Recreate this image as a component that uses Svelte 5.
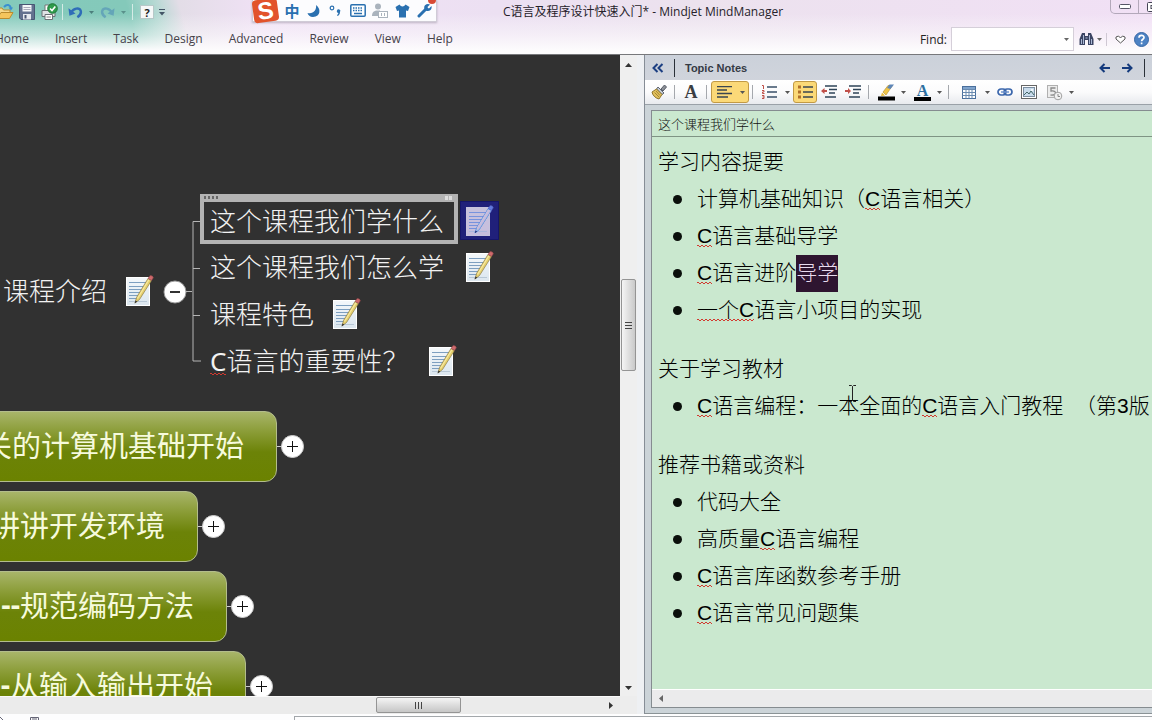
<script>
  const menus = ['Home', 'Insert', 'Task', 'Design', 'Advanced', 'Review', 'View', 'Help'];

  const subtopics = [
    { text: '这个课程我们学什么', x: 210, y: 222, iconX: 466, selected: true },
    { text: '这个课程我们怎么学', x: 210, y: 268, iconX: 466 },
    { text: '课程特色', x: 210, y: 315, iconX: 333 },
    { misspelt: 'C', text: '语言的重要性？', x: 210, y: 362, iconX: 429 }
  ];

  const mainTopics = [
    { text: '关的计算机基础开始', right: 277, top: 411 },
    { text: '讲讲开发环境', right: 198, top: 491 },
    { dash: '--', text: '规范编码方法', right: 227, top: 571 },
    { dash: '--', text: '从输入输出开始', right: 246, top: 651 }
  ];

  // Each item is a list of runs: s = spelling mark, m = selected text
  const notes = [
    {
      title: '学习内容提要',
      items: [
        [{ t: '计算机基础知识（' }, { t: 'C', s: true }, { t: '语言相关）' }],
        [{ t: 'C', s: true }, { t: '语言基础导学' }],
        [{ t: 'C', s: true }, { t: '语言进阶' }, { t: '导学', m: true }],
        [{ t: '一个C', s: true }, { t: '语言小项目的实现' }]
      ]
    },
    {
      title: '关于学习教材',
      items: [
        [
          { t: 'C', s: true },
          { t: '语言编程：一本全面的' },
          { t: 'C', s: true },
          { t: '语言入门教程\u00a0 （第3版' }
        ]
      ]
    },
    {
      title: '推荐书籍或资料',
      items: [
        [{ t: '代码大全' }],
        [{ t: '高质量' }, { t: 'C', s: true }, { t: '语言编程' }],
        [{ t: 'C', s: true }, { t: '语言库函数参考手册' }],
        [{ t: 'C', s: true }, { t: '语言常见问题集' }]
      ]
    }
  ];
</script>

{#snippet caret()}
  <svg class="caret" width="5" height="3" viewBox="0 0 5 3"><path d="M0 0h5L2.5 3z" fill="currentColor" /></svg>
{/snippet}

{#snippet noteIcon()}
  <svg width="28" height="31" viewBox="0 0 28 31">
    <defs>
      <linearGradient id="paper" x1="0" y1="0" x2="0" y2="1">
        <stop offset="0" stop-color="#f4f8fb" /><stop offset="1" stop-color="#dbe6ee" />
      </linearGradient>
    </defs>
    <rect x="0.5" y="2.5" width="23" height="28" fill="url(#paper)" stroke="#fff" />
    <path d="M3 7.5h18M3 11.5h16M3 14.5h15M3 17.5h13M3 20.5h12M3 23.5h8" stroke="#7d9fc0" />
    <path d="M3 26.5h18" stroke="#b8c8d6" />
    <path d="M9 28L10.500 22.500 22 3.500l3.500 2L13.500 24.500z" fill="#e6d06c" stroke="#8a7a48" stroke-width=".7" />
    <path d="M11.500 23.500L23 4.500" stroke="#f6e9a4" stroke-width="1.200" />
    <path d="M8.500 28.500l1-3 1.800 1.100z" fill="#333" />
    <path d="M22 3.500l1.700-2.500c1-1.200 4.200.5 3.500 2l-1.700 2.500z" fill="#cf6a6c" stroke="#8b4448" stroke-width=".6" />
  </svg>
{/snippet}

<div class="app">
  <header>
    <div class="title-row">
      <div class="quick">
        <button class="q" aria-label="Open">
          <svg width="18" height="18" viewBox="0 0 18 18"><path d="M1 15V5h5l1.500 2H14v3" fill="#f7d88a" stroke="#b98b2e" /><path d="M1 15.500l4-6h12l-3.500 6z" fill="#f5c55c" stroke="#b98b2e" /><path d="M8 4c3-3.500 6-2 7 1" fill="none" stroke="#3a8fd0" stroke-width="2" /><path d="M12.500 4.500h4.500l-2 3z" fill="#3a8fd0" /></svg>
        </button>
        <button class="q" aria-label="Save">
          <svg width="16" height="16" viewBox="0 0 16 16"><path d="M.5.5h15v15H2l-1.500-1.500z" fill="#63718f" stroke="#485573" /><path d="M3.500 1h9v6.500h-9z" fill="#f4f6f8" /><path d="M4.500 3.500h7M4.500 5.500h7" stroke="#aab" /><path d="M4 10h8v5.500H4z" fill="#e4e8ee" /><path d="M5.500 11h2v3.500h-2z" fill="#485573" /></svg>
        </button>
        <button class="q" aria-label="Quick print">
          <svg width="17" height="18" viewBox="0 0 17 18"><path d="M4 8V2h7v6" fill="#fff" stroke="#777" /><path d="M1 7.500h13v6H1z" fill="#dfe3e5" stroke="#6a7074" /><path d="M4 11.500h7.500v5H4z" fill="#fff" stroke="#6a7074" /><path d="M5.500 14h4.500" stroke="#888" /><circle cx="11.500" cy="5.500" r="4.800" fill="#2f9c4c" stroke="#1f7838" /><path d="M9 5.500l2 2 3.300-4" fill="none" stroke="#fff" stroke-width="1.600" /></svg>
        </button>
        <span class="q-sep"></span>
        <button class="q-split" aria-label="Undo">
          <svg width="15" height="13" viewBox="0 0 16 13"><path d="M3 7C6 1.500 12 1 13.500 4.500 14.500 7.500 13 9.500 10 11.500" fill="none" stroke="#2f6db8" stroke-width="2.600" /><path d="M.5 2l1 8 6.500-2.500z" fill="#2f6db8" /></svg>
          {@render caret()}
        </button>
        <button class="q-split faded" aria-label="Redo">
          <svg width="15" height="13" viewBox="0 0 16 13"><path d="M13 7C10 1.500 4 1 2.500 4.500 1.500 7.500 3 9.500 6 11.500" fill="none" stroke="#5a9ab8" stroke-width="2.600" /><path d="M15.500 2l-1 8L8 7.500z" fill="#5a9ab8" /></svg>
          {@render caret()}
        </button>
        <span class="q-sep"></span>
        <button class="q help-key" aria-label="Help"><b>?</b></button>
        <button class="q-more" aria-label="Customize toolbar">
          <svg width="6" height="7" viewBox="0 0 6 7"><path d="M0 .5h6" stroke="#456" /><path d="M0 3h6L3 6.500z" fill="#456" /></svg>
        </button>
      </div>
      <h1>C语言及程序设计快速入门* - Mindjet MindManager</h1>
      <div class="window-buttons">
        <button aria-label="Minimize"><svg width="12" height="5" viewBox="0 0 12 5"><rect x=".5" y=".5" width="11" height="4" rx="1" fill="#fff" stroke="#556" /></svg></button>
        <button aria-label="Restore"><svg width="12" height="10" viewBox="0 0 12 10"><rect x=".5" y=".5" width="11" height="9" rx="1" fill="#fff" stroke="#445" /><rect x="4" y="3.500" width="4" height="3" fill="#fff" stroke="#445" /></svg></button>
      </div>
    </div>

    <div class="menu-row">
      <nav>
        {#each menus as m}<a href="#{m.toLowerCase()}">{m}</a>{/each}
      </nav>
      <div class="find">
        <label for="find">Find:</label>
        <div class="combo">
          <input id="find" type="text" />
          <button aria-label="Recent searches">{@render caret()}</button>
        </div>
        <button class="binoculars" aria-label="Search">
          <svg width="15" height="14" viewBox="0 0 15 14"><path d="M3 1h3v3h3V1h3l2.500 6v6H9V8H6v5H.5V7z" fill="#3b4463" /><path d="M2.500 7v5M4.500 3v9M10.500 3v9M12.500 7v5M6.500 6h2" stroke="#a9b7d4" /></svg>
          {@render caret()}
        </button>
        <span class="find-sep"></span>
        <button class="heart" aria-label="Favourites">
          <svg width="11" height="9" viewBox="0 0 11 9"><path d="M5.500 3L3.500 1 1 2v2l4.500 4L10 4V2L7.500 1z" fill="#fff" stroke="#555" /></svg>
        </button>
        <button class="round-help" aria-label="Help">
          <svg width="15" height="15" viewBox="0 0 15 15"><circle cx="7.500" cy="7.500" r="7" fill="#4d82c4" stroke="#3767a5" /><path d="M5 5.800C5 2.500 10 2.700 10 5.500c0 1.800-2.400 1.700-2.400 3.700M7.600 10.500v1.800" fill="none" stroke="#fff" stroke-width="1.700" /></svg>
        </button>
      </div>
    </div>

    <div class="ime">
      <span class="ime-logo"><b>S</b></span>
      <button class="zh">中</button>
      <button aria-label="Half width"><svg width="14" height="14" viewBox="0 0 14 14"><path d="M9 1c5 3 5 12-3 12-3 0-5-2-5.500-4C6 10.500 10 6 9 1z" fill="#2a70b0" /></svg></button>
      <button aria-label="Punctuation"><svg width="14" height="12" viewBox="0 0 14 12"><circle cx="3" cy="3" r="1.800" fill="none" stroke="#2a70b0" stroke-width="1.200" /><path d="M8 5.500a1.700 1.700 0 1 1 3 1.500c0 2-1 3.500-2.500 4L8 10c1-.5 1.300-1.200 1.300-2A1.700 1.700 0 0 1 8 5.500z" fill="#2a70b0" /></svg></button>
      <button aria-label="Soft keyboard"><svg width="16" height="13" viewBox="0 0 16 13"><rect x=".8" y=".8" width="14.400" height="11.400" rx="1" fill="#fff" stroke="#2a70b0" stroke-width="1.500" /><path d="M3 4h10M3 6.500h10" stroke="#2a70b0" stroke-width="1.500" stroke-dasharray="1.500 1" /><path d="M4 9.500h8" stroke="#2a70b0" stroke-width="1.500" /></svg></button>
      <button aria-label="Account"><svg width="16" height="15" viewBox="0 0 16 15"><circle cx="6" cy="3.500" r="3" fill="#aab3bd" /><path d="M0 13c0-4 2-5.500 6-5.500h2V13z" fill="#aab3bd" /><rect x="6.500" y="8.500" width="9" height="6" fill="#fff" stroke="#aab3bd" /><path d="M9.500 10v3M12.500 10v3" stroke="#aab3bd" /></svg></button>
      <button aria-label="Skin"><svg width="15" height="14" viewBox="0 0 15 14"><path d="M4.500.5C6 3 9 3 10.500.5L14.500 3 13 7l-2-.5V13.500H4V6.500L2 7 .5 3z" fill="#2a70b0" /></svg></button>
      <button aria-label="Settings"><svg width="15" height="15" viewBox="0 0 15 15"><path d="M2 13L9 6" stroke="#2a70b0" stroke-width="3" stroke-linecap="round" /><path d="M13 1.500L10.500 4l.5 1 1 .5L14.500 3c.8 3-1.500 5.500-4.500 5C7 7.500 6.500 4 8 2.200 9.500.8 11.500.7 13 1.500z" fill="#2a70b0" /></svg></button>
      <i class="badge"></i>
    </div>
  </header>

  <main>
    <section class="map">
      <div class="canvas">
        <div class="parent-topic">课程介绍</div>
        <div class="parent-note">{@render noteIcon()}</div>
        <button class="knob minus" aria-label="Collapse">
          <svg width="24" height="24" viewBox="0 0 24 24"><circle cx="12" cy="12" r="11" fill="#fff" stroke="#999" /><path d="M7 12h10" stroke="#333" stroke-width="2" /></svg>
        </button>
        <svg class="branches" width="16" height="144" viewBox="0 0 16 144"><path d="M0 71.500h6M14 1.500H7v139.500h8M7 48.500h7M7 95.500h7" fill="none" stroke="#b5b5b5" stroke-width="1" /></svg>

        {#each subtopics as s}
          {#if s.selected}
            <div class="frame"></div>
            <div class="icon-highlight"></div>
          {/if}
          <div class="subtopic" style="left:{s.x}px;top:{s.y - 22}px">
            {#if s.misspelt}<span class="latin spell">{s.misspelt}</span>{/if}{s.text}
          </div>
          <div class="note" class:dimmed={s.selected} style="left:{s.iconX}px;top:{s.y - 17}px">{@render noteIcon()}</div>
        {/each}

        {#each mainTopics as t}
          <div class="topic" style="width:{t.right + 30}px;top:{t.top}px">
            {#if t.dash}<b>{t.dash}</b>{/if}<span>{t.text}</span>
          </div>
          <button class="knob" aria-label="Expand" style="left:{t.right}px;top:{t.top + 23}px">
            <svg width="27" height="24" viewBox="0 0 27 24"><path d="M0 12.500h5" stroke="#ccc" /><circle cx="15.500" cy="12.500" r="11" fill="#fff" stroke="#ccc" /><path d="M10 12.500h11M15.500 7v11" stroke="#111" /></svg>
          </button>
        {/each}
      </div>
      <div class="v-scroll">
        <svg width="7" height="4" viewBox="0 0 7 4"><path d="M0 4h7L3.500 0z" fill="#333" /></svg>
        <div class="v-track"><div class="v-thumb"><i></i><i></i><i></i></div></div>
        <svg width="7" height="4" viewBox="0 0 7 4"><path d="M0 0h7L3.500 4z" fill="#333" /></svg>
      </div>
      <div class="h-scroll">
        <div class="h-track"><div class="h-thumb"><i></i><i></i><i></i></div></div>
        <svg width="4" height="7" viewBox="0 0 4 7"><path d="M0 0v7l4-3.500z" fill="#333" /></svg>
      </div>
      <div class="corner"></div>
    </section>

    <aside>
      <div class="panel-head">
        <button aria-label="Collapse panel"><svg width="12" height="10" viewBox="0 0 12 10"><path d="M5.500 1L1.500 5l4 4M10.500 1l-4 4 4 4" fill="none" stroke="#1c3f82" stroke-width="2" /></svg></button>
        <span class="bar"></span>
        <h2>Topic Notes</h2>
        <button class="arrow" aria-label="Previous"><svg width="11" height="10" viewBox="0 0 11 10"><path d="M11 5H2M5.500 1l-4 4 4 4" fill="none" stroke="#143a7c" stroke-width="2" /></svg></button>
        <button class="arrow" aria-label="Next"><svg width="11" height="10" viewBox="0 0 11 10"><path d="M0 5h9M5.500 1l4 4-4 4" fill="none" stroke="#143a7c" stroke-width="2" /></svg></button>
        <span class="bar last"></span>
      </div>

      <div class="tools">
        <button aria-label="Format painter"><svg width="16" height="16" viewBox="0 0 16 16"><path d="M10 5l3.500-4L15.500 3 12 7z" fill="#8b8f96" stroke="#555b66" /><path d="M7 3l6 6-2 1.500L5.500 5z" fill="#c6ccd4" stroke="#5b6270" /><path d="M5.500 5L11 10.500 8 15C4 14 1.500 11 1 8z" fill="#e3c15c" stroke="#8e742c" /><path d="M3.500 8.500L8 13M5 7l4 4.500" stroke="#a58632" /></svg></button>
        <span class="sep"></span>
        <button class="serif-a" aria-label="Font">A</button>
        <span class="sep"></span>
        <button class="split active wide" aria-label="Align left"><svg width="15" height="12" viewBox="0 0 15 12"><path d="M0 .5h15M0 4h10M0 7.500h15M0 11h11" stroke="#3a4650" stroke-width="1.500" /></svg>{@render caret()}</button>
        <span class="sep"></span>
        <button class="split" aria-label="Numbered list"><svg width="15" height="14" viewBox="0 0 15 14"><path d="M5 2h10M5 7h10M5 12h10" stroke="#3a5068" stroke-width="1.500" /><path d="M0 .5h1.500V4M0 5.500h2v1.500H.5V8.500H2.500M0 10.500h2v3H0M.5 12h1.500" fill="none" stroke="#c05048" /></svg>{@render caret()}</button>
        <button class="active" aria-label="Bulleted list"><svg width="15" height="14" viewBox="0 0 15 14"><path d="M5 2h10M5 7h10M5 12h10" stroke="#3a4650" stroke-width="1.500" /><path d="M0 .5h3v3H0zM0 5.500h3v3H0zM0 10.500h3v3H0z" fill="#b0702a" /></svg></button>
        <button aria-label="Decrease indent"><svg width="16" height="14" viewBox="0 0 16 14"><path d="M4 1h12M8 4.500h8M8 8h6M4 12h11" stroke="#2f4458" stroke-width="1.500" /><path d="M0 6l3.500-3v2H6v2H3.500v2z" fill="#c0504a" /></svg></button>
        <button aria-label="Increase indent"><svg width="16" height="14" viewBox="0 0 16 14"><path d="M4 1h12M8 4.500h8M8 8h6M4 12h11" stroke="#2f4458" stroke-width="1.500" /><path d="M6 6L3 3v2H0v2h3v2z" fill="#c0504a" /></svg></button>
        <span class="sep"></span>
        <button class="split" aria-label="Highlight colour"><svg width="17" height="17" viewBox="0 0 17 17"><path d="M0 12.500h17V16.500H0z" fill="#000" /><path d="M4 8.500L7 11.500 3 12z" fill="#e8b830" /><path d="M5 8l5-6.500h4.500L8 11z" fill="#f0c548" stroke="#b08a2c" stroke-width=".6" /><path d="M9 4l2.500-3.500H16L12.500 5z" fill="#5e86b8" /></svg>{@render caret()}</button>
        <button class="split" aria-label="Font colour"><span class="ink">A</span>{@render caret()}</button>
        <span class="sep gap"></span>
        <button class="split" aria-label="Insert table"><svg width="14" height="13" viewBox="0 0 14 13"><rect x=".5" y=".5" width="13" height="12" fill="#fff" stroke="#4a6f9c" /><path d="M1 1h12v2H1z" fill="#7fa3cc" /><path d="M.5 3.500h13M.5 6.500h13M.5 9.500h13M4 3v9.500M7 3v9.500M10 3v9.500" stroke="#6a8bb0" /></svg>{@render caret()}</button>
        <button aria-label="Insert link"><svg width="16" height="8" viewBox="0 0 16 8"><rect x="1" y="1" width="8" height="6" rx="3" fill="none" stroke="#3a66ac" stroke-width="1.700" /><rect x="7" y="1" width="8" height="6" rx="3" fill="none" stroke="#3a66ac" stroke-width="1.700" /><path d="M4 4h8" stroke="#6f93cc" stroke-width="1.500" /></svg></button>
        <button aria-label="Insert picture"><svg width="16" height="14" viewBox="0 0 16 14"><rect x=".5" y=".5" width="15" height="13" fill="#fff" stroke="#666" /><rect x="2.500" y="2.500" width="11" height="9" fill="#c9dcec" stroke="#7c8fa2" /><path d="M3 10l3-3 2 2 2-3 3 4" fill="none" stroke="#466" /><circle cx="11" cy="5" r="1" fill="#fff" /></svg></button>
        <button class="split" aria-label="Insert date"><svg width="17" height="17" viewBox="0 0 17 17"><rect x="1.500" y="1.500" width="10" height="12" fill="#ececec" stroke="#b0b0b0" /><path d="M9.500 4H5v3c4-.5 4.500 1 4.500 2S8 11.500 4.500 11" fill="none" stroke="#8a8a8a" stroke-width="1.300" /><circle cx="12" cy="12" r="3.800" fill="#f2f2f2" stroke="#a0a0a0" /><path d="M12 10v2.500h2" fill="none" stroke="#888" /></svg>{@render caret()}</button>
      </div>

      <div class="note-area">
        <div class="note-frame">
          <div class="note-title">这个课程我们学什么</div>
          <article>
            {#each notes as n}
              <section>
                <h3>{n.title}</h3>
                <ul>
                  {#each n.items as item}
                    <li>{#each item as r}{#if r.m}<mark>{r.t}</mark>{:else}<span class:spell={r.s}>{r.t}</span>{/if}{/each}</li>
                  {/each}
                </ul>
              </section>
            {/each}
            <svg class="ibeam" width="7" height="17" viewBox="0 0 7 17"><path d="M0 .5h2.500l1 1 1-1H7M3.500 1.500v14M0 16.500h2.500l1-1 1 1H7" fill="none" stroke="#222" /></svg>
          </article>
          <div class="note-scroll"><svg width="4" height="7" viewBox="0 0 4 7"><path d="M4 0v7L0 3.500z" fill="#666" /></svg></div>
        </div>
      </div>
    </aside>
  </main>

  <footer>
    <div class="marks">
      <svg width="42" height="4" viewBox="0 0 42 4"><path d="M0 1l3 3M30.500 4V1.500h8V4M32 3h5" fill="none" stroke="#667" /></svg>
    </div>
    <div class="tabs"></div>
  </footer>
</div>

<style>
  :global(body) { margin: 0; }
  .app, .app * { box-sizing: border-box; }
  .app {
    height: 100vh;
    display: flex;
    flex-direction: column;
    overflow: hidden;
    background: #fdfdfd;
    font-family: "Open Sans", "Noto Sans CJK SC", sans-serif;
    font-size: 12px;
    color: #333;
  }
  button {
    border: 0;
    padding: 0;
    margin: 0;
    background: none;
    color: inherit;
    font: inherit;
    display: flex;
    align-items: center;
    justify-content: center;
    flex: none;
  }
  h1, h2, h3, ul { margin: 0; padding: 0; }
  h1 { font-weight: 400; }
  svg { display: block; flex: none; }

  header {
    position: relative;
    flex: none;
    height: 55px;
    overflow: hidden;
    border-bottom: 1px solid #77787b;
    background:
      linear-gradient(to bottom, rgba(255, 255, 255, 0) 25%, rgba(253, 252, 253, .5) 65%, #fdfcfd 94%),
      linear-gradient(75deg, #84cabb 0, #84c9ba 135px, #b4d8d2 162px, rgba(230, 222, 234, 0) 186px),
      linear-gradient(to right, #e3dde7 180px, #f0e1f5 260px, #ece0f2 500px, #ece2ee 700px, #f1e0f5 100%);
  }
  .title-row { display: flex; height: 24px; align-items: center; }
  .quick { display: flex; align-items: center; margin-left: -6px; flex: none; }
  .q { width: 22px; height: 22px; }
  .q-sep { width: 6px; height: 16px; border-left: 1px solid #d5ebe6; margin-left: 2px; margin-right: -2px; }
  .q-split { width: 32px; height: 22px; gap: 6px; color: #4c7f7c; padding-right: 2px; }
  .faded { opacity: .75; }
  .help-key b {
    width: 14px; height: 14px; line-height: 13px; text-align: center;
    background: #f6f8f8; border: 1px solid #b7c8c8; color: #222; font-size: 11px;
  }
  .q-more { width: 8px; height: 22px; }
  h1 { flex: 1; margin-left: 10px; text-align: center; font-size: 12px; line-height: 24px; color: #26222a; white-space: nowrap; }
  .window-buttons { display: flex; align-self: flex-start; height: 14px; margin-right: -16px; border: 1px solid #b3a8ba; border-top: 0; border-radius: 0 0 0 5px; }
  .window-buttons button { width: 28px; border-right: 1px solid #b3a8ba; }

  .menu-row { display: flex; height: 30px; align-items: center; justify-content: space-between; }
  nav { display: flex; gap: 26px; margin-left: -5px; }
  nav a { color: #45424a; text-decoration: none; line-height: 18px; }
  .find { display: flex; align-items: center; margin-right: 2px; color: #222; }
  .find label { margin-right: 4px; }
  .combo { display: flex; width: 123px; height: 24px; border: 1px solid #d5cfd9; background: #fff; }
  .combo input { flex: 1; min-width: 0; border: 0; background: none; outline: 0; font: inherit; }
  .combo button { width: 14px; color: #666; }
  .binoculars { gap: 3px; width: 32px; height: 22px; color: #666; }
  .find-sep { width: 1px; height: 13px; background: #cfc8d3; }
  .heart { width: 26px; height: 22px; }
  .round-help { width: 17px; height: 22px; }

  .ime {
    position: absolute; left: 252px; top: 0; width: 185px; height: 22px;
    display: flex; align-items: center; background: #fcfcfe;
    border: 1px solid #d0cbd6; border-top: 0; box-shadow: 0 1px 2px rgba(70, 60, 80, .3);
  }
  .ime-logo {
    flex: none; width: 25px; height: 23px; margin-right: 3px; background: #e2532b; border-radius: 4px;
    rotate: -8deg; color: #fff; font: 24px/24px "Liberation Sans", sans-serif; text-align: center;
  }
  .ime button { width: 22px; height: 22px; }
  .ime .zh { color: #2a70b0; font-size: 15px; font-weight: 700; }
  .badge { position: absolute; right: 0; top: -4px; width: 8px; height: 8px; border-radius: 50%; background: #d84a35; }

  main { flex: 1; min-height: 0; display: grid; grid-template-columns: 637fr 508fr; column-gap: 7px; background: #eef0f3; }

  .map { display: grid; grid-template-columns: minmax(0, 1fr) 17px; grid-template-rows: minmax(0, 1fr) 18px; min-width: 0; min-height: 0; }
  .canvas { position: relative; overflow: hidden; background: #313131; }
  .parent-topic, .subtopic { position: absolute; white-space: nowrap; color: #f2f2f2; font: 300 26px/40px "Noto Sans CJK SC", sans-serif; }
  .parent-topic { left: 3px; top: 215px; }
  .parent-note { position: absolute; left: 126px; top: 220px; }
  .subtopic, .note, .knob { margin-top: -55px; }
  .knob { position: absolute; }
  .minus { left: 163px; top: 280px; }
  .branches { position: absolute; left: 186px; top: 165px; }
  .frame {
    position: absolute; left: 200px; top: 139px; width: 258px; height: 50px;
    border: 4px solid #b3b3b3; border-top-width: 8px;
  }
  .frame::before { content: ""; position: absolute; left: 0; top: -6px; width: 15px; height: 3px; background: repeating-linear-gradient(to right, #666 0 2px, transparent 2px 4px); }
  .frame::after { content: ""; position: absolute; right: 2px; top: -6px; width: 7px; height: 4px; background: linear-gradient(to right, #ddd 0 3px, transparent 3px 4px, #ddd 4px); }
  .icon-highlight { position: absolute; left: 460px; top: 146px; width: 39px; height: 39px; background: #20207a; border: 1px solid #15156a; }
  .latin { font-family: "Noto Sans", sans-serif; font-weight: 400; }
  .note { position: absolute; }
  .dimmed { filter: grayscale(1) sepia(1) hue-rotate(190deg) saturate(3); opacity: .75; }
  .topic {
    position: absolute; left: -30px; height: 71px; margin-top: -55px; padding: 0 32px 6px 0;
    display: flex; align-items: center; justify-content: flex-end; white-space: nowrap;
    border: 1px solid #b3bd8c; border-radius: 12px;
    background: linear-gradient(to bottom, #a8b56a 0, #8b9d38 28%, #6c8308 58%, #6b8200 100%);
    font: 400 29px/40px "Noto Sans CJK SC", sans-serif; color: #f6fadc;
  }
  .topic b { font-family: "Open Sans", sans-serif; font-weight: 700; }

  .v-scroll { display: flex; flex-direction: column; align-items: center; padding: 8px 0 6px; background: #efefef; }
  .v-track { flex: 1; width: 100%; display: grid; grid-template-rows: 212fr 92fr 315fr; padding: 0 1px; }
  .v-thumb {
    grid-row: 2; border: 1px solid #949494; border-radius: 2px;
    background: linear-gradient(to right, #f5f5f5, #ddd 55%, #c9c9c9);
    display: flex; flex-direction: column; align-items: center; justify-content: center; gap: 2px;
  }
  .v-thumb i { width: 7px; height: 1px; background: #444; }
  .h-scroll { display: flex; align-items: center; background: #ebebeb; border-top: 1px solid #fafafa; padding-right: 7px; }
  .h-track { flex: 1; height: 100%; display: grid; grid-template-columns: 376fr 85fr 148fr; padding-bottom: 1px; }
  .h-thumb {
    grid-column: 2; border: 1px solid #949494; border-radius: 2px;
    background: linear-gradient(to bottom, #f5f5f5, #ddd 50%, #c6c6c6);
    display: flex; align-items: center; justify-content: center; gap: 2px;
  }
  .h-thumb i { width: 1px; height: 7px; background: #444; }
  .corner { background: #ededed; }

  aside { display: flex; flex-direction: column; min-width: 0; min-height: 0; overflow: hidden; border-left: 1px solid #868d96; border-bottom: 1px solid #8a9296; background: #cbd3d8; }
  .panel-head { flex: none; height: 25px; display: flex; align-items: center; padding-left: 7px; background: linear-gradient(to bottom, #cbd1da, #d0d4dc); }
  .bar { width: 1px; height: 18px; margin: 0 10px; background: #2a3038; }
  .bar.last { margin: 0 7px 0 5px; }
  h2 { flex: 1; font: 700 11px/24px "Liberation Sans", sans-serif; color: #343a44; }
  .arrow { width: 23px; height: 24px; }
  .panel-head > button:first-child { width: 12px; height: 24px; }

  .tools { flex: none; height: 25px; display: flex; align-items: center; padding-left: 2px; background: linear-gradient(to bottom, #fff, #fbfbfc 50%, #e8eaee); border-bottom: 1px solid #9aa1a8; }
  .tools button { width: 24px; height: 22px; }
  .tools .split { width: 36px; justify-content: space-between; padding: 0 3px 0 5px; color: #555; }
  .tools .wide { width: 38px; }
  .tools .active { background: #fbd978; border: 1px solid #c29a45; border-radius: 3px; }
  .sep { flex: none; width: 8px; height: 14px; background: linear-gradient(#a5a8ad, #a5a8ad) 3px 0 / 1px 100% no-repeat; }
  .sep.gap { margin-right: 4px; }
  .tools .serif-a { font: 700 18px/22px "Liberation Serif", serif; color: #3a3d42; }
  .ink { width: 17px; height: 17px; font: 700 16px/14px "Liberation Serif", serif; color: #2d6fa0; border-bottom: 4px solid #000; text-align: center; }

  .note-area { flex: 1; min-height: 0; display: flex; padding: 5px 0 5px 6px; }
  .note-frame { flex: 1; min-width: 0; display: flex; flex-direction: column; border: 1px solid #858c90; border-right: 0; background: #cae8cf; }
  .note-title { flex: none; height: 26px; padding-left: 6px; border-bottom: 1px solid #7f9484; font: 300 13px/26px "Noto Sans CJK SC", sans-serif; color: #111; }
  article {
    position: relative; flex: 1; min-height: 0; overflow: hidden; padding: 6px 0 0 6px;
    font: 300 21px/37px "Liberation Sans", "Noto Sans CJK SC", sans-serif; color: #000; white-space: nowrap;
  }
  article section { margin-bottom: 22px; }
  h3 { font: inherit; }
  ul { list-style: none; padding-left: 39px; }
  li { position: relative; }
  li::before { content: ""; position: absolute; left: -24px; top: 15px; width: 9px; height: 9px; border-radius: 50%; background: #0a0f0b; }
  .spell {
    background:
      repeating-linear-gradient(to right, #d23a30 0 2px, transparent 2px 4px) 0 calc(100% - 1px) / 100% 1px no-repeat,
      repeating-linear-gradient(to right, transparent 0 2px, #d23a30 2px 4px) 0 100% / 100% 1px no-repeat;
  }
  .latin.spell { background-position: 0 calc(100% - 5px), 0 calc(100% - 4px); }
  mark { background: #2e1530; color: #e9dcef; padding: 6px 0 8px; }
  .ibeam { position: absolute; left: 197px; top: 248px; }
  .note-scroll { flex: none; height: 18px; display: flex; align-items: center; padding-left: 7px; background: #ebebec; border-top: 1px solid #fff; }

  footer { flex: none; height: 6px; padding-top: 2px; display: grid; grid-template-columns: 294fr 858fr; background: #fdfdfe; }
  .tabs { border: 1px solid #a3a7ab; border-width: 1px 0 0 1px; }
  .marks { overflow: hidden; }
</style>
